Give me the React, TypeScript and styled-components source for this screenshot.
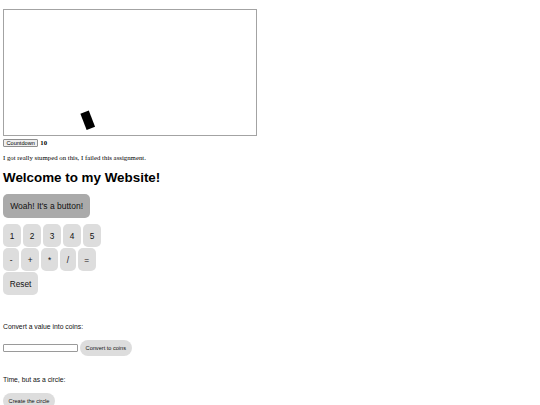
import React from 'react';
import styled, { createGlobalStyle } from 'styled-components';

const GlobalStyle = createGlobalStyle`
  html, body {
    margin: 0;
    padding: 0;
    background: #fff;
  }
  body {
    font-family: "Liberation Serif", "Times New Roman", serif;
    color: #000;
  }
`;

const Page = styled.div`
  padding: 9px 3px 0;
`;

const Stage = styled.div`
  width: 252px;
  height: 125px;
  border: 1px solid #a3a3a3;
  overflow: hidden;

  svg {
    display: block;
  }
`;

const CountRow = styled.div`
  display: flex;
  align-items: center;
  gap: 2px;
  margin-top: 2px;
  height: 9px;
`;

const SmallButton = styled.button`
  font-family: "Liberation Sans", Arial, sans-serif;
  font-size: 5.6px;
  line-height: 6px;
  height: 8px;
  padding: 0 2.5px;
  background: #efefef;
  border: 1px solid #8f8f8f;
  border-radius: 1px;
  color: #000;
`;

const Count = styled.b`
  font-size: 6.7px;
  line-height: 8px;
`;

const Note = styled.p`
  font-size: 6.8px;
  line-height: 7.7px;
  margin: 6.5px 0 0;
`;

const Title = styled.h1`
  font-family: "Liberation Sans", Arial, sans-serif;
  font-size: 13.4px;
  line-height: 16px;
  font-weight: bold;
  margin: 9px 0 8px;
`;

const Pill = styled.button<{ $dark?: boolean }>`
  font-family: "Liberation Sans", Arial, sans-serif;
  font-size: ${({ $dark }) => ($dark ? '8.5px' : '8.3px')};
  line-height: 10px;
  color: #111;
  background: ${({ $dark }) => ($dark ? '#aaaaaa' : '#dddddd')};
  border: none;
  border-radius: 5px;
  padding: ${({ $dark }) => ($dark ? '6.5px 7.2px 7px' : '6.5px 6.7px')};
  cursor: pointer;
`;

const Keypad = styled.div`
  display: flex;
  flex-direction: column;
  align-items: flex-start;
  gap: 1px;
  margin-top: 6.5px;
`;

const KeyRow = styled.div`
  display: flex;
  gap: 2px;
`;

const Section = styled.div<{ $top: number }>`
  margin-top: ${({ $top }) => $top}px;
  font-family: "Liberation Sans", Arial, sans-serif;
`;

const Label = styled.p`
  font-size: 6.8px;
  line-height: 7.7px;
  margin: 0;
  color: #111;
`;

const InlineRow = styled.div`
  display: flex;
  align-items: center;
  gap: 2px;
  margin-top: 9px;
`;

const TextBox = styled.input`
  width: 75px;
  height: 8px;
  box-sizing: border-box;
  border: 1px solid #9a9a9a;
  border-radius: 1px;
  padding: 0;
  font-size: 5.6px;
`;

const RoundButton = styled.button`
  font-family: "Liberation Sans", Arial, sans-serif;
  font-size: 5.6px;
  line-height: 6px;
  color: #111;
  background: #dddddd;
  border: none;
  border-radius: 8px;
  height: 16px;
  padding: 0 5.6px;
`;

const digits = ['1', '2', '3', '4', '5'];
const ops = ['-', '+', '*', '/', '='];

export default function App() {
  return (
    <>
      <GlobalStyle />
      <Page>
        <Stage>
          <svg width="252" height="125" viewBox="0 0 252 125">
            <rect x="79.2" y="101.5" width="9" height="17.5" fill="#000" transform="rotate(-21 83.7 110.2)" />
          </svg>
        </Stage>
        <CountRow>
          <SmallButton>Countdown</SmallButton>
          <Count>10</Count>
        </CountRow>
        <Note>I got really stumped on this, I failed this assignment.</Note>
        <Title>Welcome to my Website!</Title>
        <Pill $dark>Woah! It's a button!</Pill>
        <Keypad>
          <KeyRow>
            {digits.map((d) => (
              <Pill key={d}>{d}</Pill>
            ))}
          </KeyRow>
          <KeyRow>
            {ops.map((o) => (
              <Pill key={o}>{o}</Pill>
            ))}
          </KeyRow>
          <Pill>Reset</Pill>
        </Keypad>
        <Section $top={28}>
          <Label>Convert a value into coins:</Label>
          <InlineRow>
            <TextBox type="text" />
            <RoundButton>Convert to coins</RoundButton>
          </InlineRow>
        </Section>
        <Section $top={20}>
          <Label>Time, but as a circle:</Label>
          <InlineRow>
            <RoundButton>Create the circle</RoundButton>
          </InlineRow>
        </Section>
      </Page>
    </>
  );
}
